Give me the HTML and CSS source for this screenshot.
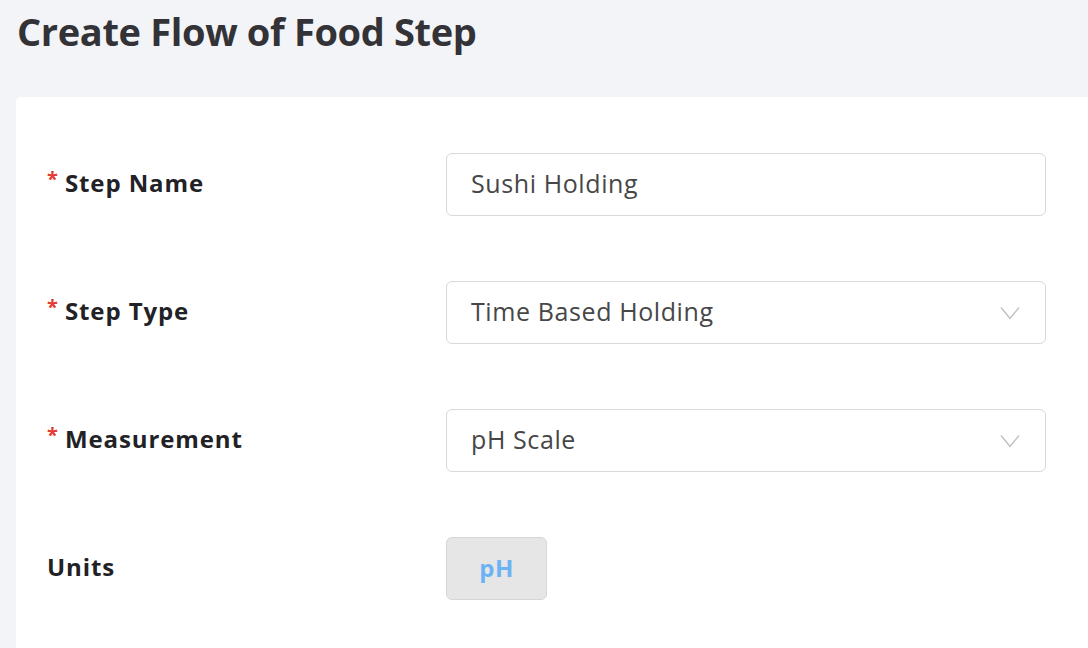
FILE: index.html
```html
<!DOCTYPE html>
<html lang="en">
<head>
<meta charset="utf-8">
<title>Create Flow of Food Step</title>
<link rel="stylesheet" href="styles.css">
</head>
<body>
<header class="page-header">
  <h1 class="page-title">Create Flow of Food Step</h1>
</header>
<main class="card">
  <form class="form-grid">
    <label class="field-label"><span class="req">*</span>Step Name</label>
    <div class="control"><span class="control-text">Sushi Holding</span></div>

    <label class="field-label"><span class="req">*</span>Step Type</label>
    <div class="control select"><span class="control-text">Time Based Holding</span>
      <svg class="chevron" width="20" height="14" viewBox="0 0 20 14"><path d="M1 1.5 L10 12.5 L19 1.5" fill="none" stroke="#bdbdbd" stroke-width="1.3"/></svg>
    </div>

    <label class="field-label"><span class="req">*</span>Measurement</label>
    <div class="control select"><span class="control-text">pH Scale</span>
      <svg class="chevron" width="20" height="14" viewBox="0 0 20 14"><path d="M1 1.5 L10 12.5 L19 1.5" fill="none" stroke="#bdbdbd" stroke-width="1.3"/></svg>
    </div>

    <label class="field-label">Units</label>
    <div class="units-cell"><span class="unit-chip">pH</span></div>
  </form>
</main>
</body>
</html>
```
FILE: styles.css
```css
html, body {
  margin: 0;
  padding: 0;
}
body {
  background: #f3f4f8;
  font-family: "Open Sans", Lato, sans-serif;
  height: 648px;
  overflow: hidden;
}
.page-header {
  padding: 9px 17px 0;
  height: 85px;
  box-sizing: border-box;
}
.page-title {
  margin: 0;
  font-size: 38px;
  line-height: 44px;
  font-weight: 700;
  color: #323237;
  letter-spacing: -0.35px;
}
.card {
  margin-top: 12px;
  margin-left: 16px;
  background: #ffffff;
  border-top-left-radius: 5px;
  height: 560px;
}
.form-grid {
  display: grid;
  grid-template-columns: 399px 600px;
  grid-auto-rows: 63px;
  row-gap: 65px;
  padding: 56px 42px 0 31px;
}
.field-label {
  display: flex;
  align-items: center;
  padding-bottom: 4px;
  box-sizing: border-box;
  font-size: 24px;
  font-weight: 700;
  color: #222226;
  letter-spacing: 0.9px;
}
.req {
  color: #e53935;
  font-size: 20px;
  margin-right: 7px;
  letter-spacing: 0;
  position: relative;
  top: -4px;
}
.control {
  display: flex;
  align-items: center;
  justify-content: space-between;
  border: 1px solid #d9d9d9;
  border-radius: 6px;
  padding: 0 25px 0 24px;
  box-sizing: border-box;
}
.control-text {
  font-size: 25px;
  color: #474747;
  letter-spacing: 0.6px;
  position: relative;
  top: -2px;
}
.chevron {
  display: block;
}
.units-cell {
  display: flex;
  align-items: stretch;
}
.unit-chip {
  display: flex;
  align-items: center;
  justify-content: center;
  width: 101px;
  box-sizing: border-box;
  padding-bottom: 3px;
  background: #e6e6e6;
  border: 1px solid #d6d6d6;
  border-radius: 6px;
  color: #6cb2f5;
  font-size: 24px;
  font-weight: 700;
  letter-spacing: 0.5px;
}
```
